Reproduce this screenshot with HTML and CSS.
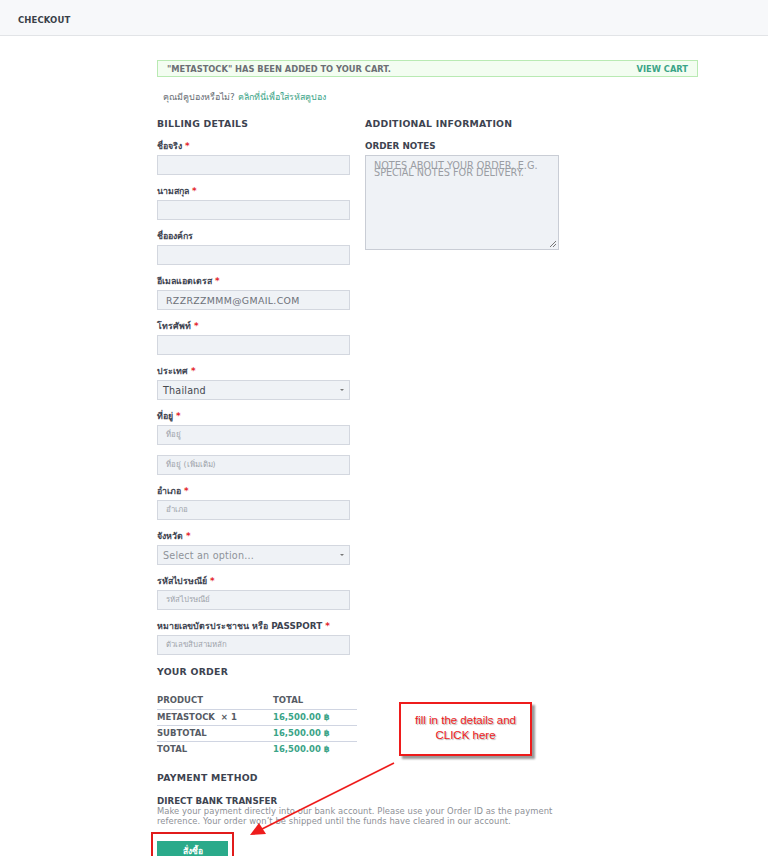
FILE: index.html
```html
<!DOCTYPE html>
<html lang="th">
<head>
<meta charset="utf-8">
<title>Checkout</title>
<link rel="stylesheet" href="styles.css">
</head>
<body>
<header class="topbar"><span class="topbar-title">CHECKOUT</span></header>
<main class="page">
  <div class="notice">
    <span>"METASTOCK" HAS BEEN ADDED TO YOUR CART.</span>
    <a class="notice-link" href="#">VIEW CART</a>
  </div>
  <p class="coupon">คุณมีคูปองหรือไม่? <a href="#">คลิกที่นี่เพื่อใส่รหัสคูปอง</a></p>

  <div class="cols">
    <section class="billing">
      <h3 class="heading">BILLING DETAILS</h3>
      <div class="field"><label>ชื่อจริง <span class="req">*</span></label><div class="input"></div></div>
      <div class="field"><label>นามสกุล <span class="req">*</span></label><div class="input"></div></div>
      <div class="field"><label>ชื่อองค์กร</label><div class="input"></div></div>
      <div class="field"><label>อีเมลแอดเดรส <span class="req">*</span></label><div class="input value">RZZRZZMMM@GMAIL.COM</div></div>
      <div class="field"><label>โทรศัพท์ <span class="req">*</span></label><div class="input"></div></div>
      <div class="field"><label>ประเทศ <span class="req">*</span></label><div class="input select"><span>Thailand</span><span class="caret"></span></div></div>
      <div class="field"><label>ที่อยู่ <span class="req">*</span></label><div class="input ph">ที่อยู่</div></div>
      <div class="field nolabel"><div class="input ph">ที่อยู่ (เพิ่มเติม)</div></div>
      <div class="field"><label>อำเภอ <span class="req">*</span></label><div class="input ph">อำเภอ</div></div>
      <div class="field"><label>จังหวัด <span class="req">*</span></label><div class="input select muted"><span>Select an option...</span><span class="caret"></span></div></div>
      <div class="field"><label>รหัสไปรษณีย์ <span class="req">*</span></label><div class="input ph">รหัสไปรษณีย์</div></div>
      <div class="field"><label>หมายเลขบัตรประชาชน หรือ PASSPORT <span class="req">*</span></label><div class="input ph">ตัวเลขสิบสามหลัก</div></div>
    </section>
    <section class="additional">
      <h3 class="heading">ADDITIONAL INFORMATION</h3>
      <div class="field"><label>ORDER NOTES</label>
        <div class="textarea"><span class="ta-ph">NOTES ABOUT YOUR ORDER, E.G. SPECIAL NOTES FOR DELIVERY.</span><span class="grip"></span></div>
      </div>
    </section>
  </div>

  <h3 class="heading order-h">YOUR ORDER</h3>
  <table class="order">
    <tr class="head"><td>PRODUCT</td><td>TOTAL</td></tr>
    <tr><td>METASTOCK &nbsp;× 1</td><td class="amt">16,500.00 ฿</td></tr>
    <tr><td>SUBTOTAL</td><td class="amt">16,500.00 ฿</td></tr>
    <tr class="last"><td>TOTAL</td><td class="amt">16,500.00 ฿</td></tr>
  </table>

  <h3 class="heading pay-h">PAYMENT METHOD</h3>
  <div class="method">DIRECT BANK TRANSFER</div>
  <p class="desc">Make your payment directly into our bank account. Please use your Order ID as the payment reference. Your order won’t be shipped until the funds have cleared in our account.</p>
  <div class="btn-wrap"><button class="btn">สั่งซื้อ</button></div>
</main>

<div class="callout">fill in the details and<br>CLICK here</div>
<svg class="arrow" width="768" height="856" viewBox="0 0 768 856">
  <line x1="394" y1="763" x2="262" y2="829" stroke="#ee1c1c" stroke-width="1.6"/>
  <polygon points="250,835 259,823 266,834" fill="#ee1c1c"/>
</svg>
</body>
</html>
```
FILE: styles.css
```css
* { box-sizing: border-box; }
html, body { margin: 0; padding: 0; background: #fff; }
body {
  font-family: "DejaVu Sans", "Noto Sans", sans-serif;
  color: #3d4350;
  width: 768px;
  height: 856px;
  overflow: hidden;
  position: relative;
}
.topbar {
  height: 36px;
  background: #f7f8fa;
  border-bottom: 1px solid #e2e4e7;
  padding: 8px 0 0 18px;
}
.topbar-title {
  font-size: 8.5px;
  font-weight: bold;
  color: #3a3f48;
  letter-spacing: 0.1px;
}
.page {
  margin-left: 157px;
  width: 541px;
  padding-top: 24px;
}
.notice {
  height: 17px;
  border: 1px solid #b9eab3;
  background: #f3fdf1;
  display: flex;
  justify-content: space-between;
  align-items: center;
  padding: 0 9px;
  font-size: 8.3px;
  color: #6b6f74;
  font-weight: 600;
}
.notice-link { color: #3aa487; text-decoration: none; font-weight: bold; }
.coupon {
  margin: 14px 0 0 6px;
  font-size: 8.9px;
  color: #666c73;
  line-height: 12px;
}
.coupon a { color: #3aa487; text-decoration: none; }
.cols {
  display: grid;
  grid-template-columns: 193px 194px;
  column-gap: 15px;
  margin-top: 15px;
}
.heading {
  margin: 0;
  font-size: 9.3px;
  font-weight: bold;
  color: #3d4350;
  line-height: 12px;
  letter-spacing: 0.25px;
}
.billing .heading, .additional .heading { margin-bottom: 10px; }
.field { margin-bottom: 10px; }
.field label {
  display: block;
  font-size: 8.8px;
  font-weight: bold;
  line-height: 12px;
  margin-bottom: 3px;
  color: #3d4350;
}
.req { color: #e3262b; }
.field.nolabel { margin-top: 6px; }
.input {
  height: 20px;
  background: #eff2f6;
  border: 1px solid #d3d7df;
  font-size: 8.5px;
  display: flex;
  align-items: center;
  padding: 0 8px;
  color: #6c7078;
}
.input.value { font-size: 9.4px; letter-spacing: 0.35px; }
.input.ph { color: #9da2aa; font-size: 7.8px; padding-bottom: 3px; }
.input.select { padding: 0 5px; justify-content: space-between; color: #45494f; font-size: 9.6px; letter-spacing: 0.2px; }
.input.select.muted { color: #8e9299; }
.caret {
  width: 0; height: 0;
  border-left: 2px solid transparent;
  border-right: 2px solid transparent;
  border-top: 2px solid #777;
}
.textarea {
  height: 95px;
  background: #eff2f6;
  border: 1px solid #c9cdd5;
  position: relative;
  padding: 6px 8px;
}
.ta-ph {
  display: block;
  font-size: 9.7px;
  line-height: 7px;
  color: #9a9da3;
  width: 172px;
}
.grip {
  position: absolute;
  right: 2px; bottom: 2px;
  width: 6px; height: 6px;
  background: linear-gradient(135deg, transparent 45%, #777 45%, #777 55%, transparent 55%, transparent 70%, #777 70%, #777 80%, transparent 80%);
}
.order-h { margin-top: 1px; }
.order {
  border-collapse: collapse;
  width: 200px;
  margin-top: 15px;
  font-size: 8.5px;
  font-weight: bold;
}
.order td { padding: 0; height: 16px; line-height: 15px; color: #565b64; }
.order td:first-child { width: 116px; }
.order tr { border-bottom: 1px solid #d0d5e2; }
.order tr.last { border-bottom: none; }
.order .amt { color: #3aa487; }
.pay-h { margin-top: 15px; }
.method {
  margin-top: 11px;
  font-size: 8.7px;
  font-weight: bold;
  line-height: 12px;
  color: #3d4350;
}
.desc {
  margin: 0;
  width: 410px;
  font-size: 8.4px;
  line-height: 9.5px;
  letter-spacing: 0.06px;
  color: #8d9096;
}
.btn-wrap {
  margin: 6px 0 0 -6px;
  width: 83px;
  height: 32px;
  border: 2px solid #e11b1b;
  padding: 5px 0 0 4px;
}
.btn {
  width: 71px;
  height: 20px;
  background: #2aaa8a;
  border: none;
  color: #fff;
  font-family: inherit;
  font-size: 8.5px;
  font-weight: bold;
  padding: 0;
}
.callout {
  position: absolute;
  left: 399px;
  top: 702px;
  width: 133px;
  height: 54px;
  border: 2px solid #ee1c1c;
  background: #fff;
  box-shadow: 3px 3px 2px #9a9a9a;
  color: #ee1c1c;
  font-family: "Liberation Sans", Arial, sans-serif;
  font-size: 11.5px;
  line-height: 15px;
  text-align: center;
  padding-top: 9px;
  text-shadow: 1px 1px 1px #b0b0b0;
}
.arrow {
  position: absolute;
  left: 0; top: 0;
  pointer-events: none;
}
```
